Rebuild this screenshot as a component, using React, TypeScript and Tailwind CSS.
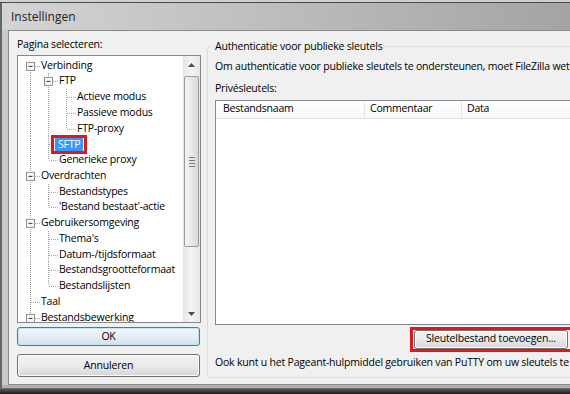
import React from "react";

type Guide = "none" | "pass" | "tee" | "corner" | "box" | "boxFirst" | "boxLast";

type Node = {
  label: string;
  guides: Guide[];
  selected?: boolean;
};

const tree: Node[] = [
  { label: "Verbinding", guides: ["boxFirst"] },
  { label: "FTP", guides: ["pass", "box"] },
  { label: "Actieve modus", guides: ["pass", "pass", "tee"] },
  { label: "Passieve modus", guides: ["pass", "pass", "tee"] },
  { label: "FTP-proxy", guides: ["pass", "pass", "corner"] },
  { label: "SFTP", guides: ["pass", "tee"], selected: true },
  { label: "Generieke proxy", guides: ["pass", "corner"] },
  { label: "Overdrachten", guides: ["box"] },
  { label: "Bestandstypes", guides: ["pass", "tee"] },
  { label: "'Bestand bestaat'-actie", guides: ["pass", "corner"] },
  { label: "Gebruikersomgeving", guides: ["box"] },
  { label: "Thema's", guides: ["pass", "tee"] },
  { label: "Datum-/tijdsformaat", guides: ["pass", "tee"] },
  { label: "Bestandsgrootteformaat", guides: ["pass", "tee"] },
  { label: "Bestandslijsten", guides: ["pass", "corner"] },
  { label: "Taal", guides: ["tee"] },
  { label: "Bestandsbewerking", guides: ["box"] },
];

const H = 15.75;
const C = H / 2;

function GuideCell({ kind }: { kind: Guide }) {
  const dot = { stroke: "#a0a0a0", strokeWidth: 1, strokeDasharray: "1 1" };
  const hasBox = kind === "box" || kind === "boxFirst" || kind === "boxLast";
  return (
    <svg width="18" height={H} viewBox={`0 0 18 ${H}`} className="shrink-0">
      {(kind === "pass" || kind === "tee" || kind === "box") && (
        <line x1="8.5" y1="0" x2="8.5" y2={H} {...dot} />
      )}
      {(kind === "corner" || kind === "boxLast") && <line x1="8.5" y1="0" x2="8.5" y2={C} {...dot} />}
      {kind === "boxFirst" && <line x1="8.5" y1={C} x2="8.5" y2={H} {...dot} />}
      {(kind === "tee" || kind === "corner") && <line x1="9" y1={C + 0.5} x2="18" y2={C + 0.5} {...dot} />}
      {hasBox && (
        <>
          <line x1="13" y1={C + 0.5} x2="18" y2={C + 0.5} {...dot} />
          <rect x="4.5" y={C - 3.5} width="8" height="8" fill="#f7f7f7" stroke="#8f8f8f" strokeWidth="1" />
          <line x1="6.5" y1={C + 0.5} x2="10.5" y2={C + 0.5} stroke="#3a3a3a" strokeWidth="1" />
        </>
      )}
    </svg>
  );
}

function TreeRow({ node }: { node: Node }) {
  return (
    <div className="flex items-center h-[15.75px] whitespace-nowrap">
      {node.guides.map((g, i) => (
        <GuideCell key={i} kind={g} />
      ))}
      {node.selected ? (
        <span className="ml-[-7px] border-[3px] border-[#e3161e] pl-[1px] pr-[1px] flex">
          <span className="bg-[#3399ff] text-white pl-[3px] pr-[3px] py-[1px] leading-[11px]">{node.label}</span>
        </span>
      ) : (
        <span className="ml-[1px]">{node.label}</span>
      )}
    </div>
  );
}

function ScrollArrow({ up }: { up?: boolean }) {
  return (
    <div className="h-[17px] flex items-center justify-center">
      <svg width="7" height="4" viewBox="0 0 7 4">
        {up ? <path d="M0 4 L3.5 0 L7 4 Z" fill="#4d4d4d" /> : <path d="M0 0 L3.5 4 L7 0 Z" fill="#4d4d4d" />}
      </svg>
    </div>
  );
}

function WinButton({ children, focused, className }: { children: React.ReactNode; focused?: boolean; className?: string }) {
  return (
    <div
      className={`flex items-center justify-center rounded-[3px] border ${
        focused
          ? "border-[#3c7fb1] bg-gradient-to-b from-[#f1f7fb] via-[#e6eef4] to-[#d5e0e8] shadow-[inset_0_0_0_1px_#bfe4f8]"
          : "border-[#707070] bg-gradient-to-b from-[#f2f2f2] via-[#ebebeb] to-[#d6d6d6] shadow-[inset_0_0_0_1px_#fcfcfc]"
      } ${className ?? ""}`}
    >
      {children}
    </div>
  );
}

export default function App() {
  return (
    <div className="w-[570px] h-[394px] overflow-hidden flex flex-col bg-[#bdbdbd] text-black font-['Open_Sans',sans-serif] text-[10.5px] tracking-[-0.2px]">
      {/* strip of the window behind */}
      <div className="h-[3px] bg-[#cfcfcf] border-b border-[#4a4a4a] shrink-0" />

      {/* title bar */}
      <div className="h-[27px] shrink-0 flex items-center pl-[9px] bg-gradient-to-r from-[#d4d4d4] via-[#bcbcbc] to-[#a4a4a4] border-l-2 border-[#666]">
        <span className="text-[12px] tracking-normal text-[#1e1e1e]">Instellingen</span>
      </div>

      {/* frame + client */}
      <div className="flex-1 flex min-h-0 pl-[6px] bg-gradient-to-r from-[#c9c9c9] to-[#a8a8a8] border-l-2 border-[#666]">
        <div className="flex-1 min-w-0 flex bg-[#f0f0f0] border border-r-0 border-[#8b8b8b]">
          {/* left column */}
          <div className="w-[191px] shrink-0 flex flex-col pl-[8px]">
            <div className="h-[15px] mt-[6px] flex items-center">Pagina selecteren:</div>
            <div className="mt-[3px] w-[184px] h-[268px] border border-[#828790] bg-white flex">
              <div className="flex-1 overflow-hidden pl-[4px] pt-[1.5px]">
                {tree.map((n) => (
                  <TreeRow key={n.label} node={n} />
                ))}
              </div>
              <div className="w-[17px] shrink-0 flex flex-col bg-gradient-to-r from-[#e6e6e6] via-[#f4f4f4] to-[#e6e6e6]">
                <ScrollArrow up />
                <div className="flex-1 flex flex-col pt-[3px] px-[1px]">
                  <div className="h-[171px] rounded-[2px] border border-[#9b9b9b] bg-gradient-to-r from-[#f4f4f4] via-[#e8e8e8] to-[#d7d7d7] flex flex-col items-center justify-center gap-[2px]">
                    <div className="w-[6px] h-px bg-[#7a7a7a]" />
                    <div className="w-[6px] h-px bg-[#7a7a7a]" />
                    <div className="w-[6px] h-px bg-[#7a7a7a]" />
                    <div className="w-[6px] h-px bg-[#7a7a7a]" />
                  </div>
                </div>
                <ScrollArrow />
              </div>
            </div>
            <WinButton focused className="mt-[4px] w-[183px] h-[19px]">OK</WinButton>
            <WinButton className="mt-[8px] w-[183px] h-[23px]">Annuleren</WinButton>
          </div>

          {/* right column */}
          <div className="flex-1 min-w-0 pl-[7px] pt-[8px]">
            <fieldset className="min-w-0 h-[339px] border border-r-0 border-[#d5dfe5] rounded-l-[3px] pl-[7px] whitespace-nowrap overflow-hidden">
              <legend className="ml-[-2px] px-[2px]">Authenticatie voor publieke sleutels</legend>
              <div className="h-[15px] mt-[5px] flex items-center">
                Om authenticatie voor publieke sleutels te ondersteunen, moet FileZilla weten welke sleutels te gebruiken.
              </div>
              <div className="h-[15px] mt-[7px] flex items-center">Privésleutels:</div>
              <div className="mt-[3px] h-[225px] border border-r-0 border-[#828790] bg-white">
                <div className="h-[18px] flex border-b border-[#e0e0e0] bg-gradient-to-b from-white to-[#f7f8fa]">
                  <div className="w-[149px] pl-[7px] flex items-center border-r border-[#e5e5e5]">Bestandsnaam</div>
                  <div className="w-[97px] pl-[5px] flex items-center border-r border-[#e5e5e5]">Commentaar</div>
                  <div className="flex-1 pl-[5px] flex items-center">Data</div>
                </div>
              </div>
              <div className="flex justify-end mt-[2px]">
                <div className="w-[160px] shrink-0 border-[3px] border-r-0 border-[#e3161e] pl-[1px] pr-[2px]">
                  <WinButton className="h-[19px] w-full">Sleutelbestand toevoegen...</WinButton>
                </div>
              </div>
              <div className="h-[15px] mt-[4px] flex items-center">
                Ook kunt u het Pageant-hulpmiddel gebruiken van PuTTY om uw sleutels te
                <span className="bg-[#f5d76e] ml-[3px]">beheren</span>.
              </div>
            </fieldset>
          </div>
        </div>
      </div>

      {/* bottom frame */}
      <div className="h-[9px] shrink-0 flex flex-col">
        <div className="h-[3px] bg-[#b0b0b0] border-l-2 border-[#666]" />
        <div className="h-px bg-[#6a6a6a]" />
        <div className="flex-1 bg-gradient-to-b from-[#5a5a5a] to-[#1c1c1c]" />
      </div>
    </div>
  );
}
